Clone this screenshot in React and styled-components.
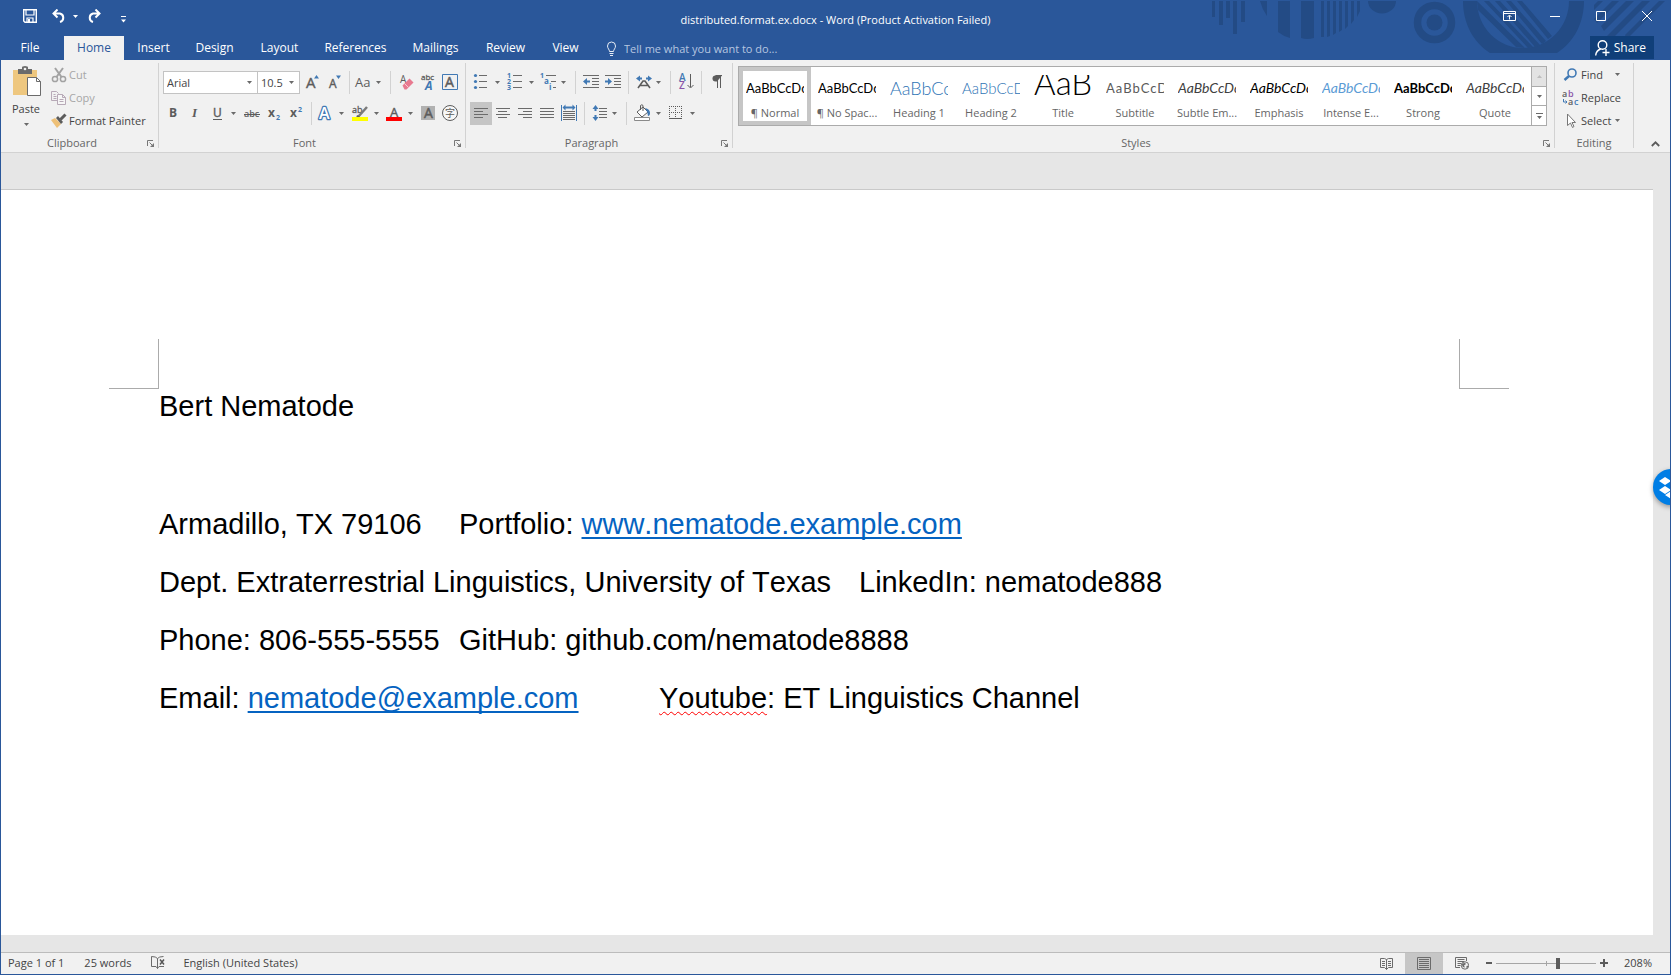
import React from "react";
import styled, { createGlobalStyle, css } from "styled-components";

const C = {
  brand: "#2a579a",
  brandDark: "#234b85",
  share: "#103f79",
  ribbon: "#f1f1f1",
  canvas: "#e6e6e6",
  line: "#d2d2d2",
  edge: "#c3c3c3",
  text: "#444444",
  muted: "#666666",
  off: "#a6a6a6",
  icon: "#5c5c5c",
  blue: "#4179b4",
  link: "#0563c1",
};

const UI = '"Open Sans", "Noto Sans", sans-serif';

const Global = createGlobalStyle`
  *, *::before, *::after { box-sizing: border-box; }
  body { margin: 0; font-family: ${UI}; font-size: 11px; color: ${C.text}; }
  button, input, select { font: inherit; color: inherit; }
  button { border: 0; padding: 0; background: none; }
  svg { display: block; flex: none; }
`;

/* ---------- window frame ---------- */

const Window = styled.div`
  position: relative;
  display: flex;
  flex-direction: column;
  min-height: 100vh;
  overflow: hidden;
  border: 1px solid ${C.brand};
  background: ${C.canvas};
`;

const Header = styled.header`
  position: relative;
  background: ${C.brand};
  color: #fff;
`;

const Ornament = styled.svg`
  position: absolute;
  top: 0;
  right: 0;
`;

const TitleBar = styled.div`
  position: relative;
  display: grid;
  grid-template-columns: 1fr auto 1fr;
  height: 35px;
`;

const QuickAccess = styled.div`
  display: flex;
  align-items: flex-start;
  gap: 6px;
  padding: 7px 0 0 19px;
`;

const QuickSplit = styled.div`
  display: flex;
`;

const QuickButton = styled.button`
  display: flex;
  align-items: center;
  justify-content: center;
  width: ${(p) => p.$w}px;
  height: 16px;
`;

const DocTitle = styled.h1`
  margin: 0;
  padding-top: 2px;
  font-size: 11px;
  font-weight: 400;
  line-height: 34px;
`;

const WindowControls = styled.div`
  display: flex;
  justify-content: flex-end;
`;

const WindowButton = styled.button`
  display: flex;
  align-items: center;
  justify-content: center;
  width: 46px;
  height: 30px;
`;

const TabRow = styled.nav`
  position: relative;
  display: flex;
  height: 24px;
`;

const Tab = styled.button`
  width: ${(p) => p.$w}px;
  line-height: 24px;
  font-size: 12px;
  color: ${(p) => (p.$active ? C.brand : "#fff")};
  background: ${(p) => (p.$active ? C.ribbon : "transparent")};
`;

const FileTab = styled(Tab)`
  margin-right: 5px;
`;

const TellMe = styled.label`
  display: flex;
  align-items: center;
  gap: 7px;
  flex: 1;
  padding-left: 13px;
`;

const TellMeInput = styled.input`
  width: 200px;
  height: 24px;
  padding: 0;
  border: 0;
  outline: 0;
  background: none;
  &::placeholder { color: #b6c6e0; opacity: 1; }
`;

const ShareButton = styled.button`
  display: flex;
  align-items: center;
  gap: 4px;
  height: 23px;
  margin-right: 16px;
  padding: 0 8px 0 5px;
  font-size: 12px;
  color: #fff;
  background: ${C.share};
`;

/* ---------- ribbon ---------- */

const Ribbon = styled.section`
  display: flex;
  height: 93px;
  background: ${C.ribbon};
  border-bottom: 1px solid ${C.line};
`;

const GroupBox = styled.div`
  display: flex;
  flex-direction: column;
  flex: ${(p) => (p.$grow ? "1 1 0" : "none")};
  min-width: 0;
  width: ${(p) => (p.$w ? p.$w + "px" : "auto")};
  margin: 3px 0 4px;
  border-right: 1px solid ${C.line};
`;

const GroupBody = styled.div`
  flex: 1;
  min-height: 0;
`;

const GroupFooter = styled.div`
  display: flex;
  align-items: center;
  height: 10px;
`;

const GroupName = styled.span`
  flex: 1;
  text-align: center;
  color: ${C.muted};
  line-height: 10px;
`;

const Launcher = styled.button`
  display: flex;
  align-items: center;
  width: 15px;
  height: 10px;
  padding-left: 4px;
`;

const ClipboardBody = styled.div`
  display: flex;
  padding-left: 7px;
`;

const PasteButton = styled.button`
  display: flex;
  flex-direction: column;
  align-items: center;
  width: 36px;
  padding-top: 3px;
`;

const PasteLabel = styled.span`
  padding: 3px 0 5px;
  line-height: 18px;
`;

const Stack = styled.div`
  display: flex;
  flex-direction: column;
  padding-left: 7px;
`;

const RowButton = styled.button`
  display: flex;
  align-items: center;
  gap: 2px;
  height: 23px;
  color: ${(p) => (p.$off ? C.off : C.text)};
`;

const RowLabel = styled.span`
  min-width: 32px;
  text-align: left;
`;

const ToolRows = styled.div`
  display: flex;
  flex-direction: column;
  gap: 8px;
  padding: 8px 0 0 4px;
`;

const ToolRow = styled.div`
  display: flex;
  height: 23px;
`;

const ToolButton = styled.button`
  width: ${(p) => p.$w}px;
  height: 23px;
  background: ${(p) => (p.$active ? "#c5c5c5" : "none")};
`;

const CaretButton = styled.button`
  display: flex;
  align-items: center;
  justify-content: center;
  width: 12px;
  height: 23px;
  padding-right: 1px;
`;

const Divider = styled.span`
  display: flex;
  justify-content: center;
  width: ${(p) => p.$w}px;
  &::before { content: ""; width: 1px; background: ${C.line}; }
`;

const ComboBox = styled.span`
  position: relative;
  display: flex;
  width: ${(p) => p.$w}px;
  height: 23px;
  margin-left: ${(p) => (p.$joined ? "-1px" : "0")};
  border: 1px solid ${C.edge};
  background: #fff;
`;

const ComboSelect = styled.select`
  flex: 1;
  min-width: 0;
  padding: 0 0 0 3px;
  border: 0;
  outline: 0;
  appearance: none;
  background: transparent;
`;

const ComboCaret = styled.span`
  position: absolute;
  top: 9px;
  right: 5px;
  pointer-events: none;
`;

/* ---------- style gallery ---------- */

const Gallery = styled.div`
  display: flex;
  height: 60px;
  margin: 3px 7px 0 5px;
  border: 1px solid #ababab;
  background: #fff;
`;

const GalleryItems = styled.div`
  display: flex;
  flex: 1;
  min-width: 0;
  overflow: hidden;
`;

const StyleButton = styled.button`
  display: flex;
  flex-direction: column;
  align-items: center;
  flex: none;
  width: 72px;
  height: 58px;
  padding-top: 8px;
  outline: ${(p) => (p.$active ? "4px solid #c6c6c6" : "0")};
  outline-offset: -4px;
`;

const samples = {
  normal: css`color: #000;`,
  h1: css`color: #2e74b5; font-size: 18px; font-weight: 300;`,
  h2: css`color: #2e74b5; font-size: 15px; font-weight: 300;`,
  title: css`color: #000; font-size: 33px; font-weight: 300; line-height: 14px;`,
  subtitle: css`color: #5a5a5a; letter-spacing: 1px;`,
  subtle: css`color: #404040; font-size: 14px; font-style: italic;`,
  emphasis: css`color: #000; font-size: 14px; font-style: italic;`,
  intense: css`color: #5b9bd5; font-size: 14px; font-style: italic;`,
  strong: css`color: #000; font-weight: 700;`,
  quote: css`color: #404040; font-size: 14px; font-style: italic;`,
};

const Sample = styled.span`
  width: 58px;
  height: 28px;
  overflow: hidden;
  text-align: left;
  white-space: nowrap;
  font-family: Lato, sans-serif;
  font-size: 13px;
  line-height: 26px;
  ${(p) => samples[p.$kind]}
`;

const StyleName = styled.span`
  line-height: 20px;
  color: ${C.muted};
  white-space: nowrap;
`;

const GalleryScroll = styled.div`
  display: flex;
  flex-direction: column;
  width: 15px;
  border-left: 1px solid #ababab;
`;

const GalleryArrow = styled.button`
  display: flex;
  align-items: center;
  justify-content: center;
  flex: 1;
  background: ${(p) => (p.$off ? "#e3e3e3" : "#fff")};
  & + & { border-top: 1px solid #ababab; }
`;

const EditingStack = styled.div`
  display: flex;
  flex-direction: column;
  align-items: flex-start;
  padding-left: 7px;
`;

const RibbonTail = styled.div`
  display: flex;
  align-items: flex-end;
  justify-content: flex-end;
  width: 36px;
  padding: 0 10px 5px 0;
`;

/* ---------- document ---------- */

const Workspace = styled.main`
  display: flex;
  flex: 1;
  padding: 36px 17px 17px 0;
`;

const Page = styled.article`
  flex: 1;
  padding: 149px 0 0;
  border-top: 1px solid #c9c9c9;
  background: #fff;
`;

const CropMarks = styled.div`
  display: flex;
  justify-content: space-between;
  padding: 0 144px 0 108px;
`;

const CropMark = styled.span`
  width: 50px;
  height: 50px;
  border: solid #ababab;
  border-width: ${(p) => (p.$side === "left" ? "0 1px 1px 0" : "0 0 1px 1px")};
`;

const TextBlock = styled.div`
  padding: 0 144px 0 158px;
  font-family: "Liberation Sans", Arial, sans-serif;
  font-size: 29px;
  font-kerning: none;
  line-height: 58px;
  color: #000;
  white-space: pre;
  tab-size: 100px;
`;

const Paragraph = styled.p`
  margin: 0;
`;

const NameParagraph = styled(Paragraph)`
  margin: -12px 0 60px;
`;

const DocLink = styled.a`
  color: ${C.link};
  text-decoration: underline;
  text-decoration-thickness: 2px;
  text-underline-offset: 3px;
  text-decoration-skip-ink: none;
`;

const Misspelled = styled.span`
  text-decoration: underline wavy #f00 1px;
  text-underline-offset: 3px;
  text-decoration-skip-ink: none;
`;

const DropboxBadge = styled.button`
  position: absolute;
  top: 468px;
  right: -19px;
  width: 36px;
  height: 36px;
  border-radius: 50%;
  background: #007ee5;
  box-shadow: 0 2px 5px rgba(0, 0, 0, 0.35);
`;

/* ---------- status bar ---------- */

const StatusBar = styled.footer`
  display: flex;
  align-items: stretch;
  height: 22px;
  border-top: 1px solid #bcbcbc;
  background: ${C.ribbon};
  line-height: 20px;
`;

const StatusItem = styled.button`
  padding: 0 ${(p) => (p.$tight ? 8 : 10)}px 2px ${(p) => (p.$first ? 7 : 10)}px;
  color: ${C.text};
  line-height: 18px;
`;

const Spacer = styled.span`
  flex: 1;
`;

const ViewButton = styled.button`
  display: flex;
  align-items: center;
  justify-content: center;
  width: 38px;
  background: ${(p) => (p.$active ? "#c6c6c6" : "none")};
`;

const ZoomButton = styled.button`
  display: flex;
  align-items: center;
  justify-content: center;
  width: 15px;
  height: 20px;
`;

const ZoomRange = styled.input`
  width: 100px;
  height: 20px;
  margin: 0;
  appearance: none;
  background:
    linear-gradient(#a6a6a6, #a6a6a6) 50px 50% / 1px 5px no-repeat,
    linear-gradient(#a6a6a6, #a6a6a6) 0 50% / 100% 1px no-repeat;
  &::-webkit-slider-thumb {
    appearance: none;
    width: 4px;
    height: 11px;
    background: #5c5c5c;
  }
`;

const ZoomValue = styled.button`
  width: 59px;
  padding: 0 5px 2px 0;
  line-height: 18px;
`;

/* ---------- small drawings ---------- */

const Caret = ({ fill = "#6a6a6a" }) => (
  <svg width="5" height="3" viewBox="0 0 5 3"><path d="M0 0h5L2.500 3z" fill={fill} /></svg>
);

const Drawing = ({ w, h = 23, children, ...rest }) => (
  <svg width={w} height={h} viewBox={`0 0 ${w} ${h}`} fill="none" aria-hidden="true" {...rest}>{children}</svg>
);

const Glyph = ({ x, y, size = 13, fill = C.icon, children, ...rest }) => (
  <text x={x} y={y} fontSize={size} fill={fill} fontFamily={UI} {...rest}>{children}</text>
);

const Lines = ({ rows, color = "#6b6b6b" }) => (
  <g fill={color} shapeRendering="crispEdges">
    {rows.map(([x, y, w]) => <rect key={`${x}-${y}`} x={x} y={y} width={w} height="1" />)}
  </g>
);

const Tool = ({ label, w = 22, active, children }) => (
  <ToolButton $w={w} $active={active} aria-label={label} aria-pressed={active}>
    <Drawing w={w}>{children}</Drawing>
  </ToolButton>
);

const More = ({ label }) => (
  <CaretButton aria-label={label}><Caret /></CaretButton>
);

const Combo = ({ label, value, w, joined }) => (
  <ComboBox $w={w} $joined={joined}>
    <ComboSelect aria-label={label} defaultValue={value}><option>{value}</option></ComboSelect>
    <ComboCaret><Caret /></ComboCaret>
  </ComboBox>
);

const Group = ({ name, w, grow, launcher = true, children }) => (
  <GroupBox $w={w} $grow={grow} role="group" aria-label={name}>
    <GroupBody>{children}</GroupBody>
    <GroupFooter>
      <GroupName>{name}</GroupName>
      {launcher && (
        <Launcher aria-label={`${name} settings`}>
          <Drawing w={7} h={7}>
            <path d="M.5 6V.5H6" stroke="#777" />
            <path d="M2.500 2.500l3 3" stroke="#777" />
            <path d="M7 3v4H3z" fill="#777" />
          </Drawing>
        </Launcher>
      )}
    </GroupFooter>
  </GroupBox>
);

const HeaderOrnament = () => (
  <Ornament width="470" height="59" viewBox="1200 1 470 59" fill={C.brandDark} aria-hidden="true">
    <path d="M1212 1h3v16h-3zM1219 1h4v24h-4zM1226 1h4v17h-4zM1233 1h4v33h-4zM1241 1h4v21h-4z" />
    <path d="M1260 1h7v15q-5-7-7-15zM1278 1h12v37q-7-2-12-6zM1301 1h13v37q-7 2-13 0z" />
    <path d="M1321 1h3v36h-3zM1327 1h3v35l-3 1zM1333 1h3v32l-3 2zM1339 1h3v29l-3 2zM1345 1h3v25l-3 3zM1351 1h3v19l-3 4zM1357 1h3v10l-3 6z" />
    <path d="M1368 1a14 12.500 0 0 0 28 0z" />
    <circle cx="1434.500" cy="22.500" r="17" fill="none" stroke={C.brandDark} strokeWidth="7.500" />
    <circle cx="1434.500" cy="22.500" r="8" />
    <path fillRule="evenodd" d="M1463 1c0 22 10 41 27 52h67c17-11 27-30 27-52h-15a46 47 0 0 1-92 0z" />
    <path d="M1477 1l1 9 38 37 9 1zM1484 1h5l44 46-5 1zM1495 1h5l40 44-5 2zM1506 1h5l35 40-4 3zM1517 1h5l30 35-4 3z" />
    <path d="M1594 5l4-4h5l-9 9zM1594 19l18-18h7l-22 22zM1601 26l25-25h8l-30 30zM1602 41l40-40h8l-42 42-6 2zM1625 35l34-34h6l-38 38z" />
  </Ornament>
);

const tabs = [
  ["Insert", 59], ["Design", 63], ["Layout", 67], ["References", 85],
  ["Mailings", 75], ["Review", 65], ["View", 55],
];

const galleryStyles = [
  ["¶ Normal", "normal"], ["¶ No Spac...", "normal"], ["Heading 1", "h1"], ["Heading 2", "h2"],
  ["Title", "title"], ["Subtitle", "subtitle"], ["Subtle Em...", "subtle"], ["Emphasis", "emphasis"],
  ["Intense E...", "intense"], ["Strong", "strong"], ["Quote", "quote"],
];

const AppHeader = () => (
  <Header>
    <HeaderOrnament />
    <TitleBar>
      <QuickAccess>
        <QuickButton $w={20} aria-label="Save">
          <Drawing w={14} h={14}>
            <path d="M.7.700h12.600v12.600H2L.7 12z" stroke="#fff" strokeWidth="1.400" />
            <path d="M3 1h8v5H3zM4 9h6v4H4z" fill={C.brand} stroke="#fff" strokeWidth="1.200" />
            <path d="M5 10h2v3H5z" fill="#fff" />
          </Drawing>
        </QuickButton>
        <QuickSplit>
          <QuickButton $w={26} aria-label="Undo">
            <Drawing w={14} h={14}>
              <path d="M5.500.500L1.500 4.500l4 4M1.500 4.500H8a4.400 4.400 0 0 1 0 8.500" stroke="#fff" strokeWidth="2" />
            </Drawing>
          </QuickButton>
          <QuickButton $w={6} aria-label="Undo history"><Caret fill="#fff" /></QuickButton>
        </QuickSplit>
        <QuickButton $w={20} aria-label="Redo">
          <Drawing w={14} h={14}>
            <path d="M8.500.500l4 4-4 4M12.500 4.500H6a4.400 4.400 0 0 0 0 8.500" stroke="#fff" strokeWidth="2" />
          </Drawing>
        </QuickButton>
        <QuickButton $w={26} aria-label="Customize Quick Access Toolbar">
          <Drawing w={5} h={14}><path d="M0 7h5v1H0zM0 10.500h5L2.500 13.500z" fill="#fff" /></Drawing>
        </QuickButton>
      </QuickAccess>
      <DocTitle>distributed.format.ex.docx - Word (Product Activation Failed)</DocTitle>
      <WindowControls>
        <WindowButton aria-label="Ribbon Display Options">
          <Drawing w={13} h={10}>
            <path d="M.5.500h12v9H.5zM.5 2.500h12M6.500 8.500V4.500M4.500 6l2-2 2 2" stroke="#fff" />
          </Drawing>
        </WindowButton>
        <WindowButton aria-label="Minimize">
          <Drawing w={10} h={10}><path d="M0 5.500h10" stroke="#fff" /></Drawing>
        </WindowButton>
        <WindowButton aria-label="Maximize">
          <Drawing w={10} h={10}><path d="M.5.500h9v9h-9z" stroke="#fff" /></Drawing>
        </WindowButton>
        <WindowButton aria-label="Close">
          <Drawing w={10} h={10}><path d="M0 0l10 10M10 0L0 10" stroke="#fff" /></Drawing>
        </WindowButton>
      </WindowControls>
    </TitleBar>
    <TabRow>
      <FileTab $w={58}>File</FileTab>
      <Tab $w={60} $active>Home</Tab>
      {tabs.map(([name, w]) => <Tab key={name} $w={w}>{name}</Tab>)}
      <TellMe>
        <Drawing w={11} h={15}>
          <path d="M3.500 10.500c0-2-2-3-2-5.500a4 4 0 0 1 8 0c0 2.500-2 3.500-2 5.500zM3.500 12.500h4M4 14.500h3" stroke="#e6ecf5" />
        </Drawing>
        <TellMeInput aria-label="Tell me what you want to do" placeholder="Tell me what you want to do..." />
      </TellMe>
      <ShareButton>
        <Drawing w={15} h={16}>
          <circle cx="7.500" cy="5" r="4.300" stroke="#fff" strokeWidth="1.400" />
          <path d="M.7 15.500c.3-3.500 2-5.500 5-6.500M7.500 12.500h7M11 9v7" stroke="#fff" strokeWidth="1.400" />
        </Drawing>
        Share
      </ShareButton>
    </TabRow>
  </Header>
);

const ClipboardGroup = () => (
  <Group name="Clipboard" w={158}>
    <ClipboardBody>
      <PasteButton>
        <Drawing w={29} h={31}>
          <path d="M1 4h24v25H1z" fill="#eec77f" />
          <path d="M6 3h4V1.500Q10 0 13 0t3 1.500V3h4v5H6z" fill="#6b6b6b" />
          <circle cx="13" cy="3" r="1.300" fill="#f1f1f1" />
          <path d="M15.500 11.500h9l4 4v14h-13z" fill="#fff" stroke="#6b6b6b" />
          <path d="M24.500 11.500v4h4" stroke="#6b6b6b" />
        </Drawing>
        <PasteLabel>Paste</PasteLabel>
        <Caret />
      </PasteButton>
      <Stack>
        <RowButton $off>
          <Drawing w={16} h={16}>
            <path d="M4 1l6.500 9M12 1L5.500 10" stroke="#a2a2a2" strokeWidth="2" />
            <circle cx="4" cy="12" r="2.600" stroke="#a2a2a2" strokeWidth="1.500" />
            <circle cx="12" cy="12" r="2.600" stroke="#a2a2a2" strokeWidth="1.500" />
          </Drawing>
          <RowLabel>Cut</RowLabel>
        </RowButton>
        <RowButton $off>
          <Drawing w={16} h={16}>
            <path d="M6 10.500H.5v-9h5l2 2M2.500 4.500h2M2.500 6.500h3M2.500 8.500h3" stroke="#b7a9b7" />
            <path d="M6.500 4.500h5l3 3v7h-8zM11.500 4.500v3h3M8.500 9.500h4M8.500 11.500h4" fill="#f6f6f6" stroke="#b7a9b7" />
          </Drawing>
          <RowLabel>Copy</RowLabel>
        </RowButton>
        <RowButton>
          <Drawing w={16} h={16}>
            <path d="M0 7l4-2 6 6-4 4z" fill="#eec077" />
            <path d="M5 5l2-2 5 6-2 2z" fill="#5c5c5c" />
            <path d="M9.500 6.500L14.500 1.500" stroke="#5c5c5c" strokeWidth="3" />
          </Drawing>
          <RowLabel>Format Painter</RowLabel>
        </RowButton>
      </Stack>
    </ClipboardBody>
  </Group>
);

const FontGroup = () => (
  <Group name="Font" w={307}>
    <ToolRows>
      <ToolRow>
        <Combo label="Font" value="Arial" w={95} />
        <Combo label="Font size" value="10.5" w={43} joined />
        <Tool label="Increase font size" w={25}>
          <Glyph x={6} y={17} size={15} stroke={C.icon} strokeWidth=".4">A</Glyph>
          <path d="M14 7.500h5L16.500 4z" fill={C.blue} />
        </Tool>
        <Tool label="Decrease font size" w={20}>
          <Glyph x={4} y={17} size={12} stroke={C.icon} strokeWidth=".4">A</Glyph>
          <path d="M11 4.500h5L13.500 8z" fill={C.blue} />
        </Tool>
        <Divider $w={8} />
        <Tool label="Change case" w={20}><Glyph x={2} y={16} size={13}>Aa</Glyph></Tool>
        <More label="Change case options" />
        <Divider $w={10} />
        <Tool label="Clear formatting">
          <Glyph x={5} y={12} size={10}>A</Glyph>
          <path d="M7.500 14.500l7-7 4 4-7 7h-2z" fill="#e8798f" />
          <path d="M9.500 12.500l4 4" stroke="#f7c9d1" />
        </Tool>
        <Tool label="Phonetic guide">
          <Glyph x={4} y={9} size={8} stroke={C.icon} strokeWidth=".3">abc</Glyph>
          <Glyph x={8} y={19} size={12} fill={C.blue} fontWeight="700" fontStyle="italic">A</Glyph>
        </Tool>
        <Tool label="Character border">
          <path d="M3.500 3.500h15v15h-15z" stroke={C.blue} />
          <Glyph x={6} y={16} size={14} stroke={C.icon} strokeWidth=".5">A</Glyph>
        </Tool>
      </ToolRow>
      <ToolRow>
        <Tool label="Bold"><Glyph x={6} y={15} size={12} fontWeight="700">B</Glyph></Tool>
        <Tool label="Italic">
          <Glyph x={7} y={15} size={13} fontWeight="700" fontStyle="italic" fontFamily="Liberation Serif">I</Glyph>
        </Tool>
        <Tool label="Underline" w={21}>
          <Glyph x={6} y={15} size={12} stroke={C.icon} strokeWidth=".4">U</Glyph>
          <Lines rows={[[6, 17, 9]]} color={C.icon} />
        </Tool>
        <More label="Underline options" />
        <Tool label="Strikethrough" w={24}>
          <Glyph x={4} y={15} size={9} fontWeight="600">abc</Glyph>
          <Lines rows={[[4, 12, 16]]} color={C.icon} />
        </Tool>
        <Tool label="Subscript" w={21}>
          <Glyph x={4} y={15} size={12} fontWeight="700">x</Glyph>
          <Glyph x={12} y={18} size={7} fill={C.blue} fontWeight="700">2</Glyph>
        </Tool>
        <Tool label="Superscript">
          <Glyph x={5} y={15} size={12} fontWeight="700">x</Glyph>
          <Glyph x={13} y={10} size={7} fill={C.blue} fontWeight="700">2</Glyph>
        </Tool>
        <Divider $w={8} />
        <Tool label="Text effects" w={21}>
          <Glyph
            x={4} y={17} size={16} fill="#fff" stroke={C.blue} strokeWidth="2.500"
            strokeLinejoin="round" fontWeight="600" paintOrder="stroke"
          >A</Glyph>
        </Tool>
        <More label="Text effects options" />
        <Tool label="Highlight" w={23}>
          <Glyph x={4} y={11} size={9} stroke={C.icon} strokeWidth=".3">ab</Glyph>
          <path d="M10 15l9-10" stroke="#7b7b7b" strokeWidth="2.500" />
          <path d="M8 16l1-3 3 2z" fill={C.icon} />
          <path d="M4 15h16v4H4z" fill="#ff0" />
        </Tool>
        <More label="Highlight colours" />
        <Tool label="Font colour">
          <Glyph x={7} y={15} size={13} stroke={C.icon} strokeWidth=".4">A</Glyph>
          <path d="M3 15h16v4H3z" fill="#f00" />
        </Tool>
        <More label="Font colours" />
        <Tool label="Character shading">
          <path d="M4 4h14v14H4z" fill="#b1b1b1" />
          <Glyph x={7} y={16} size={14} stroke={C.icon} strokeWidth=".5">A</Glyph>
        </Tool>
        <Tool label="Enclose characters">
          <circle cx="11" cy="11" r="7.500" stroke={C.icon} fill="#f7f7f7" />
          <Glyph x={6} y={15} size={10} fontFamily='"Noto Sans CJK SC"'>字</Glyph>
        </Tool>
      </ToolRow>
    </ToolRows>
  </Group>
);

const align = (xs) => xs.map(([x, w], i) => [x, 6 + i * 3, w]);

const ParagraphGroup = () => (
  <Group name="Paragraph" w={267}>
    <ToolRows>
      <ToolRow>
        <Tool label="Bullets">
          <g fill={C.blue}><circle cx="5.500" cy="4.500" r="1.600" /><circle cx="5.500" cy="10.500" r="1.600" /><circle cx="5.500" cy="16.500" r="1.600" /></g>
          <Lines rows={[[9, 4, 8], [9, 10, 8], [9, 16, 8]]} />
        </Tool>
        <More label="Bullet library" />
        <Tool label="Numbering">
          <Glyph x={3} y={7} size={7} fill={C.blue} fontWeight="700">1</Glyph>
          <Glyph x={3} y={13} size={7} fill={C.blue} fontWeight="700">2</Glyph>
          <Glyph x={3} y={19} size={7} fill={C.blue} fontWeight="700">3</Glyph>
          <Lines rows={[[9, 4, 9], [9, 10, 9], [9, 16, 9]]} />
        </Tool>
        <More label="Numbering library" />
        <Tool label="Multilevel list" w={20}>
          <Glyph x={2} y={7} size={7} fill={C.blue} fontWeight="700">1</Glyph>
          <Glyph x={6} y={13} size={8} fill={C.blue} fontWeight="700">a</Glyph>
          <Glyph x={11} y={19} size={8} fill={C.blue} fontWeight="700">i</Glyph>
          <Lines rows={[[8, 4, 10], [13, 10, 5], [15, 16, 3]]} />
        </Tool>
        <More label="List library" />
        <Divider $w={10} />
        <Tool label="Decrease indent">
          <Lines rows={[[3, 4, 16], [12, 7, 7], [12, 10, 7], [12, 13, 7], [3, 16, 16]]} />
          <path d="M3 10.500l4-3.500v2.500h3v2H7V14z" fill={C.blue} />
        </Tool>
        <Tool label="Increase indent">
          <Lines rows={[[3, 4, 16], [12, 7, 7], [12, 10, 7], [12, 13, 7], [3, 16, 16]]} />
          <path d="M10 10.500L6 7v2.500H3v2h3V14z" fill={C.blue} />
        </Tool>
        <Divider $w={9} />
        <Tool label="Asian layout" w={20}>
          <path d="M5 17l5-7h2l5 7M7 14.500h8" stroke={C.icon} strokeWidth="1.600" />
          <path d="M3 7.500l4-3v2h2v2H7v2zM19 7.500l-4-3v2h-2v2h2v2z" fill={C.blue} />
        </Tool>
        <More label="Asian layout options" />
        <Divider $w={10} />
        <Tool label="Sort">
          <Glyph x={4} y={10} size={10} fill={C.blue} fontWeight="600">A</Glyph>
          <Glyph x={4} y={18} size={10} fill="#8b56a8" fontWeight="600">Z</Glyph>
          <path d="M15.500 3v13M12.500 14l3 3 3-3" stroke={C.icon} />
        </Tool>
        <Divider $w={8} />
        <Tool label="Show marks">
          <path d="M17 4.500h-6.500a3 3 0 0 0 0 6H12" fill={C.icon} />
          <path d="M10.500 4.500H17M12.500 4v13M15.500 4v13" stroke={C.icon} />
        </Tool>
      </ToolRow>
      <ToolRow>
        <Tool label="Align left" active><Lines rows={align([[4, 14], [4, 9], [4, 14], [4, 9]])} /></Tool>
        <Tool label="Center"><Lines rows={align([[4, 14], [6, 9], [4, 14], [6, 9]])} /></Tool>
        <Tool label="Align right"><Lines rows={align([[4, 14], [9, 9], [4, 14], [9, 9]])} /></Tool>
        <Tool label="Justify"><Lines rows={align([[4, 14], [4, 14], [4, 14], [4, 14]])} /></Tool>
        <Tool label="Distribute">
          <path d="M3.500 3v16M18.500 3v16" stroke={C.blue} />
          <path d="M4.500 5.500l3-3v2h7v-2l3 3-3 3v-2h-7v2z" fill={C.blue} />
          <Lines rows={[[5, 9, 12], [5, 11, 12], [5, 13, 12], [5, 15, 12], [5, 17, 12]]} />
        </Tool>
        <Divider $w={9} />
        <Tool label="Line spacing" w={20}>
          <path d="M6.500 3L3.500 7h2v2h2V7h2zM6.500 19l-3-4h2v-2h2v2h2z" fill={C.blue} />
          <Lines rows={[[10, 6, 8], [10, 9, 8], [10, 12, 8], [10, 15, 8]]} />
        </Tool>
        <More label="Line spacing options" />
        <Divider $w={10} />
        <Tool label="Shading">
          <path d="M6 10l6-5 5 5-6 5z" fill="#fff" stroke={C.icon} />
          <path d="M9.500 8V3.500q1.500-1.500 2.500 0V9" stroke={C.icon} />
          <path d="M14 6q5 1 5 5 0 3-2 3 0-4-3-8z" fill={C.blue} />
          <path d="M3.500 15.500h15v3h-15z" fill="#fff" stroke="#8a8a8a" />
        </Tool>
        <More label="Shading colours" />
        <Tool label="Borders">
          <path d="M4.500 4v12M10.500 4v12M16.500 4v12M4 4.500h13M4 10.500h13" stroke={C.icon} strokeDasharray="1 1" />
          <path d="M4 16.500h13" stroke={C.icon} />
        </Tool>
        <More label="Border options" />
      </ToolRow>
    </ToolRows>
  </Group>
);

const StylesGroup = () => (
  <Group name="Styles" grow>
    <Gallery>
      <GalleryItems>
        {galleryStyles.map(([name, kind], i) => (
          <StyleButton key={name} $active={i === 0}>
            <Sample $kind={kind}>{kind === "title" ? "AaB" : "AaBbCcDc"}</Sample>
            <StyleName>{name}</StyleName>
          </StyleButton>
        ))}
      </GalleryItems>
      <GalleryScroll>
        <GalleryArrow $off aria-label="Previous styles">
          <Drawing w={5} h={3}><path d="M0 3h5L2.500 0z" fill="#bdbdbd" /></Drawing>
        </GalleryArrow>
        <GalleryArrow aria-label="Next styles"><Caret /></GalleryArrow>
        <GalleryArrow aria-label="All styles">
          <Drawing w={7} h={6}><path d="M0 0h7v1H0zM1 3h5L3.500 6z" fill="#6a6a6a" /></Drawing>
        </GalleryArrow>
      </GalleryScroll>
    </Gallery>
  </Group>
);

const EditingGroup = () => (
  <Group name="Editing" w={79} launcher={false}>
    <EditingStack>
      <RowButton>
        <Drawing w={17} h={16}>
          <circle cx="10" cy="6" r="4" stroke={C.blue} strokeWidth="1.600" />
          <path d="M7 9l-4.500 4" stroke={C.blue} strokeWidth="2.400" />
        </Drawing>
        <RowLabel>Find</RowLabel>
        <Caret />
      </RowButton>
      <RowButton>
        <Drawing w={17} h={16}>
          <Glyph x={0} y={7} size={9} fontWeight="600">a</Glyph>
          <Glyph x={6} y={7} size={9} fontWeight="600" fill="#8b56a8">b</Glyph>
          <Glyph x={6} y={15} size={9} fontWeight="600">a</Glyph>
          <Glyph x={12} y={15} size={9} fontWeight="600" fill={C.blue}>c</Glyph>
          <path d="M1.500 9v3H5M3.500 10.500L5 12l-1.500 1.500" stroke={C.blue} />
        </Drawing>
        <RowLabel>Replace</RowLabel>
      </RowButton>
      <RowButton>
        <Drawing w={17} h={16}>
          <path d="M5.500 1v11.500l3-2.500 2 4.500 1.500-1-2-4h3.500z" fill="#fff" stroke="#777" />
        </Drawing>
        <RowLabel>Select</RowLabel>
        <Caret />
      </RowButton>
    </EditingStack>
  </Group>
);

const Pages = () => (
  <Page>
    <CropMarks aria-hidden="true"><CropMark $side="left" /><CropMark $side="right" /></CropMarks>
    <TextBlock>
      <NameParagraph>Bert Nematode</NameParagraph>
      <Paragraph>{"Armadillo, TX 79106\tPortfolio: "}<DocLink href="#portfolio">www.nematode.example.com</DocLink></Paragraph>
      <Paragraph>{"Dept. Extraterrestrial Linguistics, University of Texas\tLinkedIn: nematode888"}</Paragraph>
      <Paragraph>{"Phone: 806-555-5555\tGitHub: github.com/nematode8888"}</Paragraph>
      <Paragraph>{"Email: "}<DocLink href="#email">nematode@example.com</DocLink>{"\t"}<Misspelled>Youtube</Misspelled>: ET Linguistics Channel</Paragraph>
    </TextBlock>
  </Page>
);

const Status = () => (
  <StatusBar>
    <StatusItem $first>Page 1 of 1</StatusItem>
    <StatusItem>25 words</StatusItem>
    <StatusItem $tight aria-label="Proofing errors">
      <Drawing w={14} h={13}>
        <path d="M6.500 2.500Q5 .5 .5 .5v10h4.500l1.500 2 1.500-2h5M6.500 2.500v10M6.500 2.500Q8 .5 12.500.5" stroke="#6b6b6b" />
        <path d="M9 3.500l4 5M13 3.500l-4 5" stroke="#555" strokeWidth="1.500" />
      </Drawing>
    </StatusItem>
    <StatusItem>English (United States)</StatusItem>
    <Spacer />
    <ViewButton aria-label="Read mode">
      <Drawing w={13} h={12}>
        <path d="M.5.500h4l2 1 2-1h4v9h-4l-2 2-2-2h-4zM6.500 1.500v10" stroke="#6b6b6b" />
        <path d="M2 3.500h3M2 5.500h3M2 7.500h3M8 3.500h3M8 5.500h3M8 7.500h3" stroke="#6b6b6b" />
      </Drawing>
    </ViewButton>
    <ViewButton $active aria-label="Print layout">
      <Drawing w={14} h={13}>
        <path d="M.5.500h13v12H.5zM2 2.500h10M2 4.500h10M2 6.500h10M2 8.500h10M2 10.500h10" stroke="#6b6b6b" />
      </Drawing>
    </ViewButton>
    <ViewButton aria-label="Web layout">
      <Drawing w={14} h={13}>
        <path d="M5 10.500H.5V.500h11V4M2.500 2.500h7M2.500 4.500h7M2.500 6.500h4M2.500 8.500h3" stroke="#6b6b6b" />
        <circle cx="10" cy="8.500" r="3.700" fill="#f1f1f1" stroke="#6b6b6b" />
        <path d="M7 7q3-2 4 0l-2 1.500 1 2q-3 0-3-3.500zM11.500 9l2-.5q0 2-2 3z" fill="#6b6b6b" />
      </Drawing>
    </ViewButton>
    <ZoomButton aria-label="Zoom out"><Drawing w={6} h={2}><path d="M0 1h6" stroke="#5c5c5c" strokeWidth="2" /></Drawing></ZoomButton>
    <ZoomRange type="range" aria-label="Zoom" min="0" max="100" defaultValue="63" />
    <ZoomButton aria-label="Zoom in"><Drawing w={8} h={8}><path d="M0 4h8M4 0v8" stroke="#5c5c5c" strokeWidth="2" /></Drawing></ZoomButton>
    <ZoomValue>208%</ZoomValue>
  </StatusBar>
);

export default function App() {
  return (
    <Window>
      <Global />
      <AppHeader />
      <Ribbon>
        <ClipboardGroup />
        <FontGroup />
        <ParagraphGroup />
        <StylesGroup />
        <EditingGroup />
        <RibbonTail>
          <button aria-label="Collapse the ribbon">
            <Drawing w={9} h={6}><path d="M.8 5l3.700-3.700L8.200 5" stroke="#5c5c5c" strokeWidth="1.800" /></Drawing>
          </button>
        </RibbonTail>
      </Ribbon>
      <Workspace><Pages /></Workspace>
      <Status />
      <DropboxBadge aria-label="Dropbox">
        <Drawing w={36} h={36}>
          <path d="M12 8l6 4-6 4-6-4zM24 8l6 4-6 4-6-4zM12 17l6 4-6 4-6-4zM24 17l6 4-6 4-6-4zM18 22l6 4-6 4-6-4z" fill="#fff" />
        </Drawing>
      </DropboxBadge>
    </Window>
  );
}
